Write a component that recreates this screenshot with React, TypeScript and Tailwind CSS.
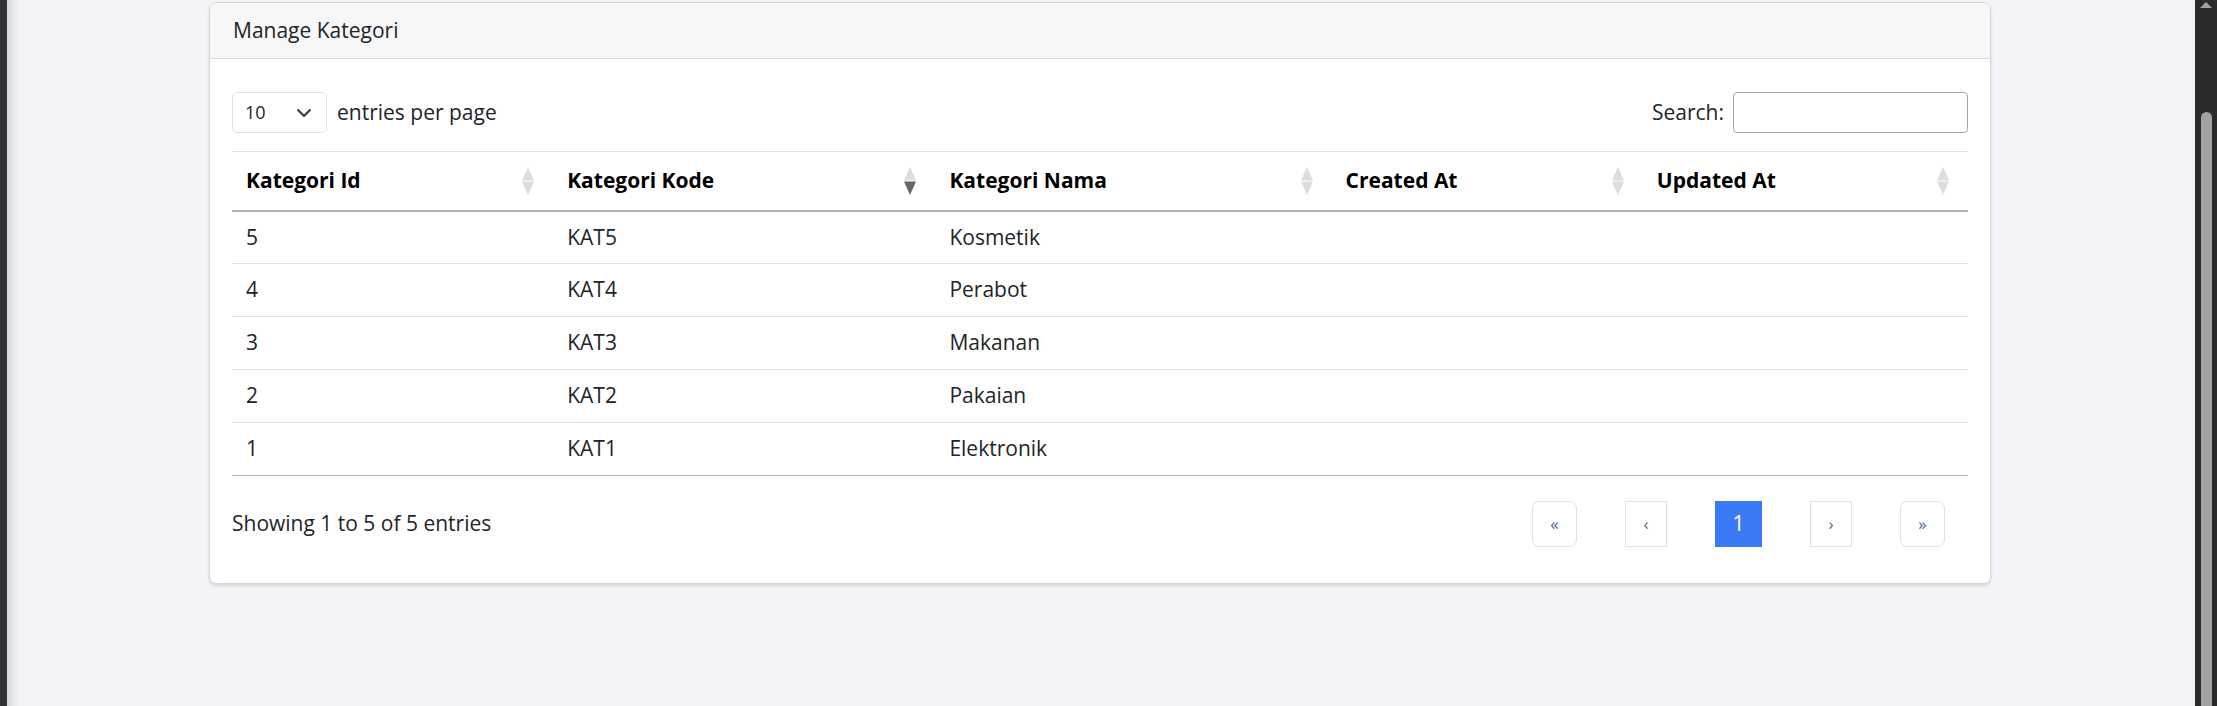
import { ChevronDown } from 'lucide-react';

const rows = [
  { id: 5, kode: 'KAT5', nama: 'Kosmetik' },
  { id: 4, kode: 'KAT4', nama: 'Perabot' },
  { id: 3, kode: 'KAT3', nama: 'Makanan' },
  { id: 2, kode: 'KAT2', nama: 'Pakaian' },
  { id: 1, kode: 'KAT1', nama: 'Elektronik' },
];

const columns = [
  { label: 'Kategori Id', width: 321, sorted: false },
  { label: 'Kategori Kode', width: 382, sorted: true },
  { label: 'Kategori Nama', width: 396, sorted: false },
  { label: 'Created At', width: 311, sorted: false },
  { label: 'Updated At', width: 325, sorted: false },
];

function SortIcon({ active }: { active: boolean }) {
  return (
    <svg width="12" height="28" viewBox="0 0 12 28" className="absolute right-[19px] top-1/2 -translate-y-1/2">
      <polygon points="6,0 12,13.5 0,13.5" fill="#dddddd" />
      <polygon points="0,14.5 12,14.5 6,28" fill={active ? '#666666' : '#dddddd'} />
    </svg>
  );
}

function PageButton({ label, active, rounded }: { label: string; active?: boolean; rounded?: boolean }) {
  return (
    <button
      className={`h-[46px] flex items-center justify-center text-[17px] border ${
        active ? 'bg-[#3a7bf5] border-[#3a7bf5] text-white text-[21px] w-[47px]' : 'bg-white border-[#e2e2e2] text-[#4f6485]'
      } ${rounded ? 'rounded-[7px] w-[45px]' : active ? '' : 'w-[42px]'}`}
    >
      {label}
    </button>
  );
}

export default function App() {
  return (
    <div className="h-[706px] w-full flex bg-[#f3f4f8] overflow-hidden text-[#212529]" style={{ fontFamily: '"Open Sans", "Noto Sans", sans-serif' }}>
      {/* sidebar edge */}
      <div className="w-[7px] bg-[#2f3338] shrink-0" />
      <div className="w-[12px] shrink-0 bg-gradient-to-r from-[#d9dadd] to-[#f3f4f8]" />

      <div className="flex-1 pl-[190px] pr-[204px] pt-[2px]">
        <div className="bg-white border border-[#d6d6d6] rounded-[7px] shadow-[0_2px_3px_rgba(0,0,0,0.12)] overflow-hidden">
          {/* Card header */}
          <div className="h-[56px] bg-[#f7f7f7] border-b border-[#d9d9d9] px-[23px] flex items-center text-[21px]">
            Manage Kategori
          </div>

          <div className="px-[22px] pt-[33px] pb-[36px]">
            {/* Top controls */}
            <div className="flex items-center justify-between h-[41px]">
              <div className="flex items-center gap-[10px]">
                <div className="w-[95px] h-[41px] border border-[#dee2e6] rounded-[5px] flex items-center justify-between pl-[12px] pr-[10px] text-[18px]">
                  <span>10</span>
                  <ChevronDown className="w-[24px] h-[24px] text-[#343a40]" strokeWidth={2} />
                </div>
                <span className="text-[21px]">entries per page</span>
              </div>
              <div className="flex items-center gap-[9px]">
                <span className="text-[21px]">Search:</span>
                <div className="w-[235px] h-[41px] border border-[#a6a6a6] rounded-[4px]" />
              </div>
            </div>

            {/* Table */}
            <table className="w-full table-fixed mt-[18px] border-collapse text-[21px]">
              <colgroup>
                {columns.map((c) => (
                  <col key={c.label} style={{ width: c.width }} />
                ))}
              </colgroup>
              <thead>
                <tr className="h-[59px] border-t border-[#e2e2e2] border-b-2 border-b-[#b3b3b3]">
                  {columns.map((c) => (
                    <th key={c.label} className="relative text-left font-bold text-black pl-[14px]">
                      {c.label}
                      <SortIcon active={c.sorted} />
                    </th>
                  ))}
                </tr>
              </thead>
              <tbody>
                {rows.map((r, i) => (
                  <tr
                    key={r.id}
                    className={`h-[53px] ${i === rows.length - 1 ? 'border-b border-[#b3b3b3]' : 'border-b border-[#e2e2e2]'}`}
                  >
                    <td className="pl-[14px]">{r.id}</td>
                    <td className="pl-[14px]">{r.kode}</td>
                    <td className="pl-[14px]">{r.nama}</td>
                    <td className="pl-[14px]"></td>
                    <td className="pl-[14px]"></td>
                  </tr>
                ))}
              </tbody>
            </table>

            {/* Footer */}
            <div className="flex items-center justify-between mt-[25px] pr-[23px]">
              <span className="text-[21px]">Showing 1 to 5 of 5 entries</span>
              <div className="flex items-center gap-[48px]">
                <PageButton label="«" rounded />
                <PageButton label="‹" />
                <PageButton label="1" active />
                <PageButton label="›" />
                <PageButton label="»" rounded />
              </div>
            </div>
          </div>
        </div>
      </div>

      {/* scrollbar */}
      <div className="w-[22px] shrink-0 bg-[#2b2b2b] flex flex-col items-center pt-[2px]">
        <div className="w-0 h-0 border-l-[6px] border-r-[6px] border-b-[6px] border-l-transparent border-r-transparent border-b-[#a3a3a3]" />
        <div className="mt-[104px] w-[11px] flex-1 bg-[#a3a3a3] rounded-t-full" />
      </div>
    </div>
  );
}
